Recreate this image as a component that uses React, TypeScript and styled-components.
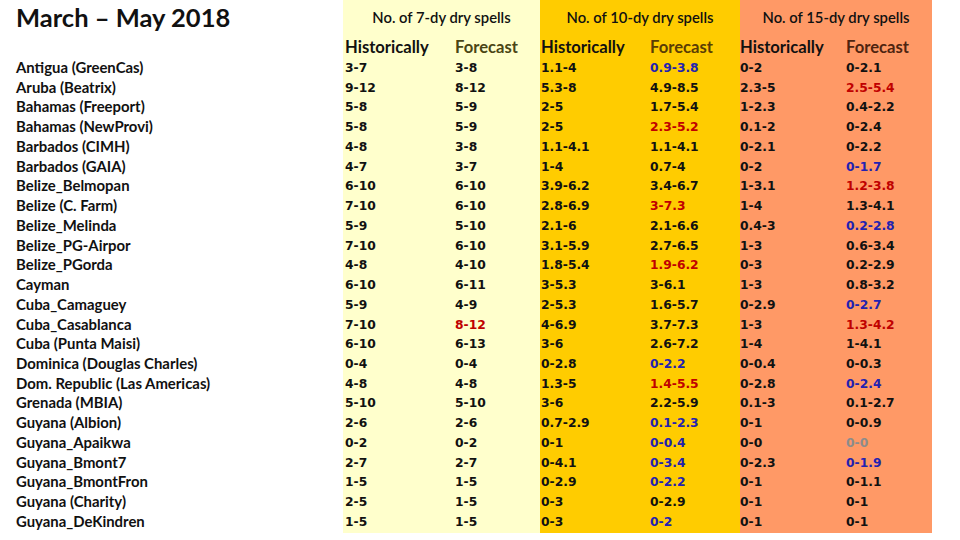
import React from "react";
import styled, { createGlobalStyle } from "styled-components";

const Global = createGlobalStyle`
  html, body { margin: 0; padding: 0; background: #ffffff; }
  body { width: 960px; height: 540px; overflow: hidden; }
`;

type Tone = "n" | "r" | "b" | "g";
type Cell = [string, Tone];

const n = (v: string): Cell => [v, "n"];
const r = (v: string): Cell => [v, "r"];
const b = (v: string): Cell => [v, "b"];
const g = (v: string): Cell => [v, "g"];

const stations: { name: string; cells: Cell[] }[] = [
  { name: "Antigua (GreenCas)", cells: [n("3-7"), n("3-8"), n("1.1-4"), b("0.9-3.8"), n("0-2"), n("0-2.1")] },
  { name: "Aruba (Beatrix)", cells: [n("9-12"), n("8-12"), n("5.3-8"), n("4.9-8.5"), n("2.3-5"), r("2.5-5.4")] },
  { name: "Bahamas (Freeport)", cells: [n("5-8"), n("5-9"), n("2-5"), n("1.7-5.4"), n("1-2.3"), n("0.4-2.2")] },
  { name: "Bahamas (NewProvi)", cells: [n("5-8"), n("5-9"), n("2-5"), r("2.3-5.2"), n("0.1-2"), n("0-2.4")] },
  { name: "Barbados (CIMH)", cells: [n("4-8"), n("3-8"), n("1.1-4.1"), n("1.1-4.1"), n("0-2.1"), n("0-2.2")] },
  { name: "Barbados (GAIA)", cells: [n("4-7"), n("3-7"), n("1-4"), n("0.7-4"), n("0-2"), b("0-1.7")] },
  { name: "Belize_Belmopan", cells: [n("6-10"), n("6-10"), n("3.9-6.2"), n("3.4-6.7"), n("1-3.1"), r("1.2-3.8")] },
  { name: "Belize (C. Farm)", cells: [n("7-10"), n("6-10"), n("2.8-6.9"), r("3-7.3"), n("1-4"), n("1.3-4.1")] },
  { name: "Belize_Melinda", cells: [n("5-9"), n("5-10"), n("2.1-6"), n("2.1-6.6"), n("0.4-3"), b("0.2-2.8")] },
  { name: "Belize_PG-Airpor", cells: [n("7-10"), n("6-10"), n("3.1-5.9"), n("2.7-6.5"), n("1-3"), n("0.6-3.4")] },
  { name: "Belize_PGorda", cells: [n("4-8"), n("4-10"), n("1.8-5.4"), r("1.9-6.2"), n("0-3"), n("0.2-2.9")] },
  { name: "Cayman", cells: [n("6-10"), n("6-11"), n("3-5.3"), n("3-6.1"), n("1-3"), n("0.8-3.2")] },
  { name: "Cuba_Camaguey", cells: [n("5-9"), n("4-9"), n("2-5.3"), n("1.6-5.7"), n("0-2.9"), b("0-2.7")] },
  { name: "Cuba_Casablanca", cells: [n("7-10"), r("8-12"), n("4-6.9"), n("3.7-7.3"), n("1-3"), r("1.3-4.2")] },
  { name: "Cuba (Punta Maisi)", cells: [n("6-10"), n("6-13"), n("3-6"), n("2.6-7.2"), n("1-4"), n("1-4.1")] },
  { name: "Dominica (Douglas Charles)", cells: [n("0-4"), n("0-4"), n("0-2.8"), b("0-2.2"), n("0-0.4"), n("0-0.3")] },
  { name: "Dom. Republic (Las Americas)", cells: [n("4-8"), n("4-8"), n("1.3-5"), r("1.4-5.5"), n("0-2.8"), b("0-2.4")] },
  { name: "Grenada (MBIA)", cells: [n("5-10"), n("5-10"), n("3-6"), n("2.2-5.9"), n("0.1-3"), n("0.1-2.7")] },
  { name: "Guyana (Albion)", cells: [n("2-6"), n("2-6"), n("0.7-2.9"), b("0.1-2.3"), n("0-1"), n("0-0.9")] },
  { name: "Guyana_Apaikwa", cells: [n("0-2"), n("0-2"), n("0-1"), b("0-0.4"), n("0-0"), g("0-0")] },
  { name: "Guyana_Bmont7", cells: [n("2-7"), n("2-7"), n("0-4.1"), b("0-3.4"), n("0-2.3"), b("0-1.9")] },
  { name: "Guyana_BmontFron", cells: [n("1-5"), n("1-5"), n("0-2.9"), b("0-2.2"), n("0-1"), n("0-1.1")] },
  { name: "Guyana (Charity)", cells: [n("2-5"), n("1-5"), n("0-3"), n("0-2.9"), n("0-1"), n("0-1")] },
  { name: "Guyana_DeKindren", cells: [n("1-5"), n("1-5"), n("0-3"), b("0-2"), n("0-1"), n("0-1")] },
];

const panels = [
  { title: "No. of 7-dy dry spells", bg: "#FFFFCC", fc: "#4A4514", width: 197, pad: 2, split: 110 },
  { title: "No. of 10-dy dry spells", bg: "#FFCC00", fc: "#5A3D05", width: 200, pad: 1, split: 109 },
  { title: "No. of 15-dy dry spells", bg: "#FF9966", fc: "#4E2410", width: 192, pad: 0, split: 106 },
];

const toneColor: Record<Tone, string> = {
  n: "#111111",
  r: "#C00000",
  b: "#2222B0",
  g: "#8C8C8C",
};

const ROW = 19.74;

const Page = styled.div`
  display: flex;
  align-items: flex-start;
  width: 960px;
  height: 540px;
`;

const Labels = styled.div`
  width: 343px;
  display: flex;
  flex-direction: column;
`;

const Title = styled.h1`
  margin: 0;
  height: 58px;
  padding: 2px 0 0 16px;
  box-sizing: border-box;
  font-family: Lato, "Open Sans", sans-serif;
  font-weight: 700;
  font-size: 25.5px;
  line-height: 30px;
  color: #111;
`;

const Name = styled.div`
  height: ${ROW}px;
  line-height: ${ROW}px;
  padding-left: 16px;
  font-family: Lato, "Open Sans", sans-serif;
  font-weight: 700;
  font-size: 14.9px;
  color: #111;
  white-space: nowrap;
`;

const Panel = styled.section<{ $bg: string; $w: number }>`
  width: ${(p) => p.$w}px;
  background: ${(p) => p.$bg};
  display: flex;
  flex-direction: column;
  padding-bottom: 1px;
`;

const PanelTitle = styled.div`
  height: 34px;
  line-height: 34px;
  text-align: center;
  font-family: Lato, "Open Sans", sans-serif;
  font-weight: 600;
  font-size: 14.8px;
  color: #111;
  white-space: nowrap;
`;

const Grid = styled.div<{ $split: number; $pad: number }>`
  display: grid;
  grid-template-columns: ${(p) => p.$split}px 1fr;
  padding-left: ${(p) => p.$pad}px;
`;

const SubHead = styled.div<{ $color: string }>`
  height: 24px;
  line-height: 26px;
  font-family: Lato, "Open Sans", sans-serif;
  font-weight: 700;
  font-size: 16.6px;
  color: ${(p) => p.$color};
  white-space: nowrap;
`;

const Value = styled.div<{ $tone: Tone }>`
  height: ${ROW}px;
  line-height: ${ROW + 1}px;
  font-family: "DejaVu Sans", Verdana, sans-serif;
  font-weight: 700;
  font-size: 12.3px;
  color: ${(p) => toneColor[p.$tone]};
  white-space: nowrap;
`;

export default function App() {
  return (
    <>
      <Global />
      <Page>
        <Labels>
          <Title>March – May 2018</Title>
          {stations.map((s) => (
            <Name key={s.name}>{s.name}</Name>
          ))}
        </Labels>
        {panels.map((p, pi) => (
          <Panel key={p.title} $bg={p.bg} $w={p.width}>
            <PanelTitle>{p.title}</PanelTitle>
            <Grid $split={p.split} $pad={p.pad}>
              <SubHead $color="#111">Historically</SubHead>
              <SubHead $color={p.fc}>Forecast</SubHead>
              {stations.map((s) => (
                <React.Fragment key={s.name}>
                  <Value $tone={s.cells[pi * 2][1]}>{s.cells[pi * 2][0]}</Value>
                  <Value $tone={s.cells[pi * 2 + 1][1]}>{s.cells[pi * 2 + 1][0]}</Value>
                </React.Fragment>
              ))}
            </Grid>
          </Panel>
        ))}
      </Page>
    </>
  );
}
